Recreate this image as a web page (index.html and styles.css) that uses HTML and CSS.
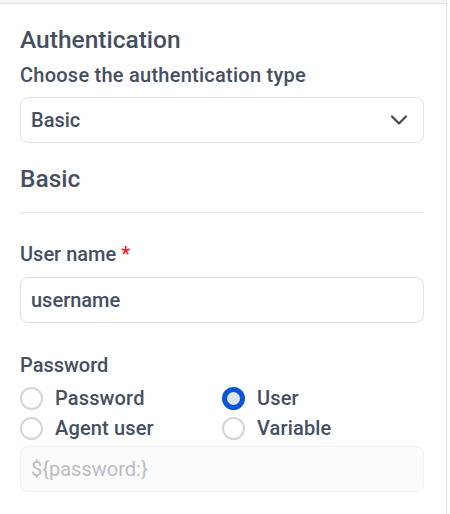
FILE: index.html
```html
<!DOCTYPE html>
<html>
<head>
<meta charset="utf-8">
<link rel="stylesheet" href="styles.css">
</head>
<body>
<div class="topbar"></div>
<div class="panel">
  <h2 class="heading">Authentication</h2>
  <div class="label label-first">Choose the authentication type</div>
  <div class="select">
    <span>Basic</span>
    <svg class="chev" width="18" height="12" viewBox="0 0 18 12"><path d="M2 2.5 L9 9.5 L16 2.5" fill="none" stroke="#3f4858" stroke-width="2.2" stroke-linecap="round" stroke-linejoin="round"/></svg>
  </div>
  <h2 class="heading heading-basic">Basic</h2>
  <div class="divider"></div>
  <div class="label label-user">User name <span class="req">*</span></div>
  <div class="input">username</div>
  <div class="label label-pass">Password</div>
  <div class="radios">
    <div class="radio"><span class="circle"></span>Password</div>
    <div class="radio"><span class="circle checked"></span>User</div>
    <div class="radio"><span class="circle"></span>Agent user</div>
    <div class="radio"><span class="circle"></span>Variable</div>
  </div>
  <div class="input disabled">${password:}</div>
</div>
</body>
</html>
```
FILE: styles.css
```css
html, body {
  margin: 0;
  padding: 0;
  background: #ffffff;
}
body {
  font-family: Roboto, "Noto Sans", sans-serif;
  color: #454f5f;
  width: 450px;
  height: 514px;
  overflow: hidden;
}
.topbar {
  height: 3px;
  background: #f4f4f4;
  border-bottom: 1px solid #e6e6e6;
  width: 447px;
}
.panel {
  width: 404px;
  height: 510px;
  padding: 22px 22px 0 20px;
  border-right: 1px solid #e3e3e3;
  box-sizing: content-box;
}
.heading {
  margin: 0;
  font-size: 24.5px;
  font-weight: 500;
  line-height: 28px;
  color: #454f5f;
}
.label {
  font-size: 20px;
  font-weight: 500;
  line-height: 24px;
}
.label-first {
  margin-top: 9px;
  letter-spacing: 0.25px;
}
.select {
  margin-top: 10px;
  height: 46px;
  box-sizing: border-box;
  border: 1px solid #e0e2e5;
  border-radius: 8px;
  display: flex;
  align-items: center;
  justify-content: space-between;
  padding: 0 15px 0 10px;
  font-size: 20px;
  font-weight: 500;
}
.chev {
  display: block;
}
.heading-basic {
  margin-top: 22px;
}
.divider {
  margin-top: 19px;
  height: 1px;
  background: #e0e2e6;
}
.label-user {
  margin-top: 29px;
}
.req {
  color: #f21b1b;
}
.input {
  margin-top: 11px;
  height: 46px;
  box-sizing: border-box;
  border: 1px solid #e0e2e5;
  border-radius: 8px;
  display: flex;
  align-items: center;
  padding: 0 10px;
  font-size: 20px;
  font-weight: 500;
}
.label-pass {
  margin-top: 30px;
}
.radios {
  margin-top: 6px;
  display: grid;
  grid-template-columns: 202px 1fr;
  grid-auto-rows: 30px;
}
.radio {
  display: flex;
  align-items: center;
  font-size: 20px;
  font-weight: 500;
  letter-spacing: 0.15px;
}
.circle {
  width: 23px;
  height: 23px;
  box-sizing: border-box;
  border: 2px solid #d2d5da;
  border-radius: 50%;
  margin-right: 12px;
  background: #fff;
  flex: none;
}
.circle.checked {
  border: 5px solid #0b54d4;
  background: #dde6ef;
}
.input.disabled {
  margin-top: 3px;
  background: #fafbfb;
  border-color: #eef0f1;
  color: #b9bdc4;
  font-weight: 400;
}
```
